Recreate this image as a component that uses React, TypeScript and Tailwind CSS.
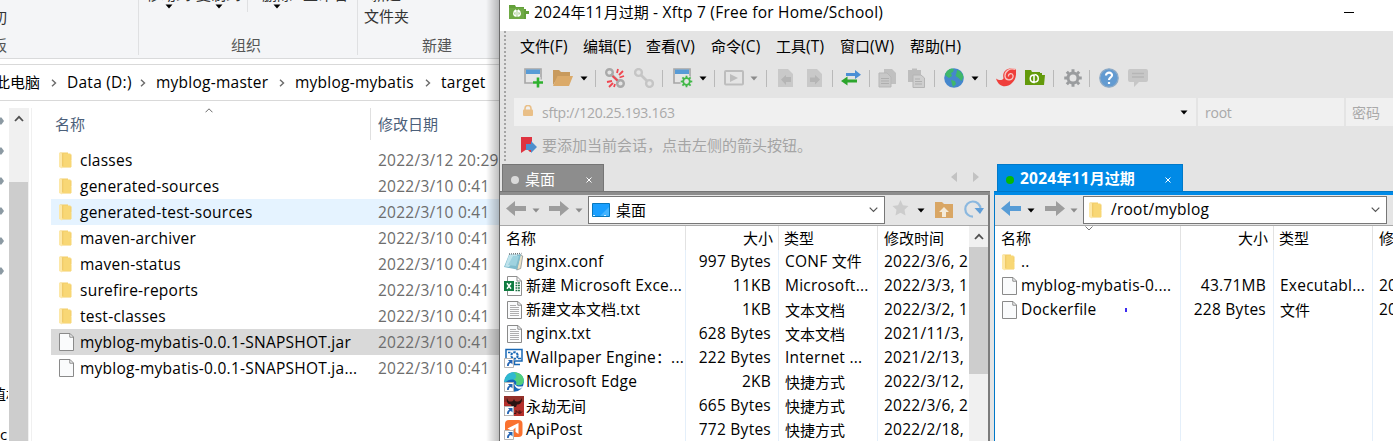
import React from "react";

const SANS = "font-['Open_Sans','Noto_Sans_CJK_SC',sans-serif]";

/* Latin runs are set slightly larger than the Chinese text around them. */
function Label({ children, className = "" }: { children: string; className?: string }) {
  const runs = children.match(/[\u2e80-\uffff]+|[^\u2e80-\uffff]+/g) ?? [];
  return (
    <span className={"inline-block text-[15px] whitespace-pre " + className}>
      {runs.map((run, i) =>
        /[\u2e80-\uffff]/.test(run) ? run : (
          <span key={i} className="text-[15.5px] tracking-[0.25px]">{run}</span>
        ),
      )}
    </span>
  );
}

function Down({ gray = false, className = "" }: { gray?: boolean; className?: string }) {
  return (
    <svg width="8" height="5" viewBox="0 0 8 5" className={"shrink-0 " + className}>
      <path d="M0.5 0.5h7L4 4.5z" fill={gray ? "#8c8c8c" : "#000"} />
    </svg>
  );
}

function Folder() {
  return (
    <svg width="13" height="17" viewBox="0 0 13 17" className="shrink-0">
      <path d="M1 .5h8V2l3.500.5V8l-.5 1v6.500H3z" fill="#f3cd69" />
      <path d="M4 1.500h7.500v6L12.500 9v6H4z" fill="#f8d775" />
      <path d="M0 .500 3.500 1.500V14L3 16.500 0 15z" fill="#fde8a8" />
      <path d="M3.700 1.500V14" stroke="#e9bf55" strokeWidth=".7" />
    </svg>
  );
}

function Page({ lines = false }: { lines?: boolean }) {
  return (
    <svg width="15" height="18" viewBox="0 0 15 18" className="shrink-0">
      <path d="M.5.5h10.5l3.5 3.5v13.5H.5z" fill="#fafbfc" stroke="#8a8a8a" />
      <path d="M10.8.5v3.7h3.7" fill="none" stroke="#8a8a8a" />
      {lines && <path d="M3 4.500h6M3 6.500h9M3 8.500h9M3 10.500h9M3 12.500h9M3 14.500h9" stroke="#9a9a9a" strokeWidth=".8" />}
    </svg>
  );
}

function Shortcut() {
  return (
    <g>
      <path d="M.5 10.500h9v9h-9z" fill="#fff" stroke="#b5b5b5" />
      <path d="M3 18c0-3 1-4 2.500-4.300L4 12h4.500v4.500L7 15c-1.500.3-2 1-2.200 3z" fill="#2464b4" />
    </g>
  );
}

function FileIcon({ kind }: { kind: string }) {
  if (kind === "txt") return <span className="ml-[3px] flex w-[17px] shrink-0"><Page lines /></span>;
  return (
    <svg width="20" height="20" viewBox="0 0 20 20" className="shrink-0">
      {kind === "conf" && (
        <>
          <path d="M16 2.500 18.700 4l-2 12.500-4 1.500z" fill="#ece2c8" stroke="#7c8588" strokeWidth=".7" />
          <path d="M5 2.500 17 2.500 13 17.500 0 15z" fill="#7fbccd" />
          <path d="M5 3h8.500L5 15 1 14.500z" fill="#bfe3ec" />
          <path d="M9 4h6l-3 10-8-1z" fill="#9ed2df" />
          <path d="M5 2 17.500 1.500" stroke="#6c7478" strokeWidth="1.400" strokeDasharray="1 1" />
        </>
      )}
      {kind === "xls" && (
        <>
          <path d="M3.500.5h9.500l4.500 4.500v14.500h-14z" fill="#fff" stroke="#8f8f8f" />
          <path d="M13 .5V5h4.500" fill="none" stroke="#8f8f8f" />
          <path d="M11.500 7h4.500M11.500 9.500h4.500M11.500 12h4.500M11.500 14.500h4.500" stroke="#217346" strokeWidth="1.400" strokeDasharray="1.900 .6" />
          <path d="M0 5h10v10H0z" fill="#107c41" />
          <path d="m3 7.300 4 5.400m0-5.400-4 5.400" stroke="#fff" strokeWidth="1.500" />
        </>
      )}
      {kind === "wall" && (
        <>
          <path d="M2 1.500h16v11.500H2z" fill="#fff" stroke="#1868b5" strokeWidth="1.500" />
          <circle cx="10.500" cy="7.500" r="3.200" fill="#fff" stroke="#1868b5" strokeWidth="2" strokeDasharray="2.500 .85" />
          <path d="M4 4.500h2.500M14 10.500h3M10.500 13v3M10 16.500h6" stroke="#1868b5" strokeWidth="1.500" />
          <Shortcut />
        </>
      )}
      {kind === "edge" && (
        <>
          <circle cx="10" cy="10" r="9.800" fill="#1767b8" />
          <path d="M.3 9C1 3 5 .2 10 .2c6 0 10 4 9.800 8.800-.3 4-5 5-8 3.500 2-2 0-5-3.500-5C5 7.500 2 9 .5 12z" fill="#2fb9d0" />
          <path d="M9 .2c7-.4 11 4 10.800 8.800-.3 4-5 5-8 3.500 1.500-1.500.5-4-2-4.800C13 6 13 2 9 .2z" fill="#52cf7c" />
          <path d="M10.500 11.500c1 3 5 3.800 8.500 2.500-.8 1.500-1.800 2.300-2.800 2.800-3 .3-6-2-5.700-5.300z" fill="#fff" />
          <Shortcut />
        </>
      )}
      {kind === "game" && (
        <>
          <path d="M0 0h20v20H0z" fill="#b5302c" />
          <path d="M0 0h20v6H0z" fill="#93302a" />
          <path d="M3 2c1 4 3 4 6 3l1-2 1 2c3 1 5 1 7-3 0 5-2 6.500-5 6.500L12 11H8L7 8.500C4 8.500 2 6 3 2z" fill="#2b1413" />
          <path d="M10 17.500h2v-3l3 3v-3m1 0v3l2-2" fill="none" stroke="#3b1313" />
          <Shortcut />
        </>
      )}
      {kind === "api" && (
        <>
          <rect x="1" width="17.500" height="17" rx="4" fill="#fa7230" />
          <path d="m3.500 8.500 11-5.500V14L11.500 12V7.500L8 11z" fill="#fff" />
          <Shortcut />
        </>
      )}
    </svg>
  );
}

const explorerRows = [
  ["classes", "2022/3/12 20:29"],
  ["generated-sources", "2022/3/10 0:41"],
  ["generated-test-sources", "2022/3/10 0:41"],
  ["maven-archiver", "2022/3/10 0:41"],
  ["maven-status", "2022/3/10 0:41"],
  ["surefire-reports", "2022/3/10 0:41"],
  ["test-classes", "2022/3/10 0:41"],
  ["myblog-mybatis-0.0.1-SNAPSHOT.jar", "2022/3/10 0:41"],
  ["myblog-mybatis-0.0.1-SNAPSHOT.ja...", "2022/3/10 0:41"],
];

function Chevron({ className }: { className: string }) {
  return (
    <svg width="6" height="8" viewBox="0 0 6 8" className={"shrink-0 " + className}>
      <path d="m1 .8 3.500 3.200L1 7.200" fill="none" stroke="#6a6a6a" strokeWidth="1.400" />
    </svg>
  );
}

function UpArrow() {
  return (
    <svg width="10" height="7" viewBox="0 0 10 7" className="shrink-0">
      <path d="m1 6 4-4.200L9 6" fill="none" stroke="#505050" strokeWidth="1.800" />
    </svg>
  );
}

function Explorer() {
  return (
    <section className="relative flex h-full w-[500px] shrink-0 flex-col overflow-hidden bg-white">
      <div className="flex h-[59px] shrink-0 border-b border-[#d9dadb] bg-[#f4f5f7] text-[15px] leading-[20px] text-[#333]">
        <div className="flex h-[55px] w-[139px] shrink-0 flex-col border-r border-[#dfe0e2] pt-[7px]">
          <span className="-ml-2">切</span>
          <span className="-ml-2 mt-2 text-[#555]">板</span>
        </div>
        <div className="flex h-[55px] w-[219px] shrink-0 flex-col border-r border-[#dfe0e2]">
          <div className="flex h-3">
            <div className="flex w-[109px] gap-[5px] border-r border-[#dfe0e2] pl-[7px]">
              <span className="-mt-[16px] flex h-7 w-[45px] flex-col items-center whitespace-nowrap">移动到<Down /></span>
              <span className="-mt-[16px] flex h-7 w-[45px] flex-col items-center whitespace-nowrap">复制到<Down /></span>
            </div>
            <div className="flex gap-[9px] pl-[12px]">
              <span className="-mt-[16px] flex h-7 w-[34px] flex-col items-center whitespace-nowrap">删除<Down /></span>
              <span className="-mt-[16px] whitespace-nowrap">重命名</span>
            </div>
          </div>
          <span className="mt-[23px] pr-1 text-center text-[#555]">组织</span>
        </div>
        <div className="flex w-[142px] flex-col pl-[6px]">
          <span className="-mt-[16px] pl-[7px]">新建</span>
          <span className="mt-[2px]">文件夹</span>
          <span className="mt-[9px] pl-[58px] text-[#555]">新建</span>
        </div>
      </div>
      <div className="mt-[5px] flex h-[37px] shrink-0 items-center border-y border-[#d9d9d9] text-black">
        <Label className="-ml-[5px] w-[45px] shrink-0">此电脑</Label>
        <Chevron className="ml-[11px]" />
        <Label className="ml-[10px] w-[63px] shrink-0">Data (D:)</Label>
        <Chevron className="ml-[10px]" />
        <Label className="ml-[10px] w-[112px] shrink-0">myblog-master</Label>
        <Chevron className="ml-[11px]" />
        <Label className="ml-[10px] w-[119px] shrink-0">myblog-mybatis</Label>
        <Chevron className="ml-[11px]" />
        <Label className="ml-[10px]">target</Label>
      </div>
      <div className="flex min-h-0 flex-1 pt-[7px]">
        <div className="flex w-[8px] shrink-0 flex-col overflow-hidden text-[15px] whitespace-nowrap">
          {[0, 1, 2, 3, 4, 5].map((i) => (
            <svg key={i} width="5" height="30" viewBox="0 0 5 30" className="-mt-[2px] mb-[2px] shrink-0">
              <path d="M0 11.500h1.500L4 15l-2.500 3.500H0z" fill="#8c9aa3" />
            </svg>
          ))}
          <span className="mt-[95px] -ml-[9px] leading-[22px]">值机</span>
          <span className="mt-[18px] -ml-[11px] leading-[22px]">.sc</span>
        </div>
        <div className="ml-px flex w-[20px] shrink-0 flex-col items-center bg-[#f0f0f0] pt-[7px]">
          <UpArrow />
          <div className="mt-[60px] w-[19px] flex-1 self-start bg-[#cdcdcd]" />
        </div>
        <div className="ml-[2px] flex min-w-0 flex-1 flex-col border-l border-[#f0f0f0] pl-[19px]">
          <div className="flex h-[39px] shrink-0 text-[15px] text-[#4c607a]">
            <div className="flex h-8 w-[320px] items-center border-r border-[#e0e0e0]">
              <span className="w-[154px] pl-1">名称</span>
              <svg width="8" height="5" viewBox="0 0 8 5" className="mb-[27px]">
                <path d="m.5 4.300 3.500-3.500 3.500 3.500" fill="none" stroke="#6a6a6a" />
              </svg>
            </div>
            <span className="flex h-8 items-center pl-[7px]">修改日期</span>
          </div>
          {explorerRows.map(([name, date], i) => (
            <div
              key={i}
              className={
                "flex h-[26px] shrink-0 items-center pl-2 " +
                (i === 2 ? "bg-[#e5f3ff]" : i === 7 ? "bg-[#d9d9d9]" : "")
              }
            >
              <span className="flex w-[21px] shrink-0">{i < 7 ? <Folder /> : <Page />}</span>
              <Label className="w-[298px] shrink-0 pt-px text-black">{name}</Label>
              <Label className="pt-px text-[#6d6d6d]">{date}</Label>
            </div>
          ))}
        </div>
      </div>
      <div className="absolute inset-y-0 right-0 w-[14px] border-r border-[#6b6b6b] bg-linear-to-r from-transparent to-black/25" />
    </section>
  );
}

function Sep({ className }: { className: string }) {
  return <span className={"h-[17px] w-px shrink-0 bg-[#b9b9b9] " + className} />;
}

function Tool({ children, className }: { children: React.ReactNode; className: string }) {
  return (
    <svg width="20" height="20" viewBox="0 0 20 20" fill="none" className={"shrink-0 " + className}>
      {children}
    </svg>
  );
}

function WindowShape() {
  return (
    <>
      <path d="M1 1h16v14H1z" fill="#e6e6e6" stroke="#a6a6a6" strokeWidth="1.600" />
      <path d="M2 1.500h14V6H2z" fill="#579bd6" />
    </>
  );
}

function Gear({ cx, cy, r, color, width }: { cx: number; cy: number; r: number; color: string; width: number }) {
  return (
    <g stroke={color}>
      <circle cx={cx} cy={cy} r={r} strokeWidth={width} />
      {[0, 45, 90, 135, 180, 225, 270, 315].map((a) => (
        <path key={a} d={`M${cx} ${cy - r}v-${r * 0.75}`} strokeWidth={width} transform={`rotate(${a} ${cx} ${cy})`} />
      ))}
    </g>
  );
}

function Toolbar() {
  return (
    <div className="flex h-[36px] shrink-0 items-center pb-[4px] pl-[23px]">
      <Tool className="">
        <WindowShape />
        <path d="M14 9v10M9 14h10" stroke="#e4e4e4" strokeWidth="5" />
        <path d="M14 9.500v10M9 14.500h10" stroke="#2fb12f" strokeWidth="2.600" />
      </Tool>
      <Tool className="ml-[9px]">
        <path d="M0 2h6l2 2h9v4H6L0 17z" fill="#c89a5d" />
        <path d="M4.500 8h15.500l-4 10H0z" fill="#dbaa69" />
      </Tool>
      <Down className="ml-[7px]" />
      <Sep className="ml-[7px]" />
      <Tool className="ml-[9px]">
        <circle cx="4.500" cy="4.500" r="3.300" stroke="#a9a9a9" strokeWidth="2.400" />
        <circle cx="15.500" cy="15.500" r="3.300" stroke="#a9a9a9" strokeWidth="2.400" />
        <path d="m6 6 8 8" stroke="#a9a9a9" strokeWidth="2.500" />
        <path d="m7.500 8 5 4.500M12 5l1-4M14 7l4-4M14.500 9.500 19 8M7 13l-5 1M8 15l-4 4M10 16l-1 3" stroke="#ef4650" strokeWidth="1.800" />
      </Tool>
      <Tool className="ml-[9px]">
        <circle cx="4.500" cy="4.500" r="3.400" stroke="#c5c5c5" strokeWidth="2.400" />
        <circle cx="15.500" cy="15.500" r="3.400" stroke="#c5c5c5" strokeWidth="2.400" />
        <path d="m6.500 6.500 7 7" stroke="#c5c5c5" strokeWidth="2.700" />
      </Tool>
      <Sep className="ml-[8px]" />
      <Tool className="ml-[10px]">
        <WindowShape />
        <circle cx="13.500" cy="13.500" r="6.300" fill="#e4e4e4" />
        <Gear cx={13.5} cy={13.5} r={3.3} color="#42b849" width={1.8} />
      </Tool>
      <Down className="ml-[6px]" />
      <Sep className="ml-[7px]" />
      <Tool className="ml-[9px]">
        <rect x="1" y="3" width="18" height="13.500" rx="1" stroke="#bdbdbd" strokeWidth="2" />
        <path d="m6 6 8 4-8 4z" fill="#bdbdbd" />
      </Tool>
      <Down gray className="ml-[6px]" />
      <Sep className="ml-[8px]" />
      <Tool className="ml-[9px]">
        <path d="M2 1h10l5 5v13H2z" fill="#c9c9c9" />
        <path d="M15 9v5h-5v3l-5-5.500L10 7v2z" fill="#b5b5b5" />
      </Tool>
      <Tool className="ml-[9px]">
        <path d="M2 1h10l5 5v13H2z" fill="#c9c9c9" />
        <path d="M5 9.500h5V7l5 4.500-5 5V14H5z" fill="#b5b5b5" />
      </Tool>
      <Sep className="ml-[7px]" />
      <Tool className="ml-[8px]">
        <path d="M5 5h9V2l6 4.700-6 4.300V8H5z" fill="#4b8fd5" />
        <path d="M16 11.500H6.500v-3L0 13l6.500 4.500v-3H16z" fill="#2ca52c" />
      </Tool>
      <Sep className="ml-[8px]" />
      <Tool className="ml-[8px]">
        <path d="M6 1h8l4 4v11H6z" fill="#c0c0c0" />
        <path d="M1 5h8l4 4v10H1z" fill="#c8c8c8" stroke="#b7b7b7" />
        <path d="M3 10.500h8M3 13h8M3 15.500h8" stroke="#afafaf" />
      </Tool>
      <Tool className="ml-[9px]">
        <path d="M1 2h4V.5h5V2h4v12H1z" fill="#bdbdbd" />
        <path d="M6 7h8l3.500 3v9.500H6z" fill="#cfcfcf" stroke="#b5b5b5" />
        <path d="M8 11h5M8 13.500h7M8 16h7" stroke="#afafaf" />
      </Tool>
      <Sep className="ml-[7px]" />
      <Tool className="ml-[9px]">
        <circle cx="10" cy="10" r="9.800" fill="#4587cd" />
        <path d="M3 3c3-3 5-3 7-2l-1 3-2 1 1 3-3 2-3-2-1-2zM13 2c4 1 6 4 6.500 7l-2 4-3-3-3-2 1-3zM7 12l4 1 1 3-3 3-1-3z" fill="#3fb76b" />
      </Tool>
      <Down className="ml-[7px]" />
      <Sep className="ml-[7px]" />
      <Tool className="ml-[9px]">
        <path d="M0 10.500c3 2 6 2 7.500 0C6 4 10 .5 15 .5L20 1c.5 7-.5 11-4 14-5 5-13 5-16-4.500z" fill="#ef3f3b" />
        <path d="M19.500 1.500c-6-2-11 2-10.500 7 1 5 9 4 8-1-1-3-5-2-4.500 1" stroke="#f8c5c1" strokeWidth="1.300" />
      </Tool>
      <Tool className="ml-[9px]">
        <path d="M0 2h6l1 2h8v1h2v2h3l-1 10H0z" fill="#639a0b" />
        <path d="M9 6.500v8c-5-.5-5-7.500 0-7.500zM9.500 14c5 0 5-7 0-7.500" stroke="#fff" strokeWidth="1.500" />
      </Tool>
      <Sep className="ml-[8px]" />
      <Tool className="ml-[9px]">
        <Gear cx={10} cy={10} r={5} color="#9a9c9e" width={3} />
      </Tool>
      <Sep className="ml-[6px]" />
      <Tool className="ml-[9px]">
        <circle cx="10" cy="10" r="9.200" fill="#639bd1" stroke="#8daac6" strokeWidth="1.300" />
        <path d="M7 7.500C7 3.500 13.500 4 13 7.500c-.2 2-3 2-3 4.500M10 14v2" stroke="#fff" strokeWidth="2.200" />
      </Tool>
      <Tool className="ml-[9px]">
        <path d="M2 1h16q2 0 2 2v9q0 2-2 2h-7l-5 5v-5H2q-2 0-2-2V3q0-2 2-2z" fill="#c7c7c7" />
        <path d="M4 5.500h12M4 9h12" stroke="#b6b6b6" strokeWidth="1.500" />
      </Tool>
    </div>
  );
}

function Arrow({ right = false, blue = false, className }: { right?: boolean; blue?: boolean; className: string }) {
  return (
    <svg width="20" height="15" viewBox="0 0 20 15" className={"shrink-0 " + className}>
      <path d={right ? "M0 5h11V0l9 7.500-9 7.500v-5H0z" : "M20 5H9V0L0 7.500 9 15v-5h11z"} fill={blue ? "#579cd6" : "#9d9d9d"} />
    </svg>
  );
}

function ComboDown() {
  return (
    <svg width="9" height="6" viewBox="0 0 9 6" className="ml-auto shrink-0">
      <path d="m.7.700 3.800 3.800L8.300.7" fill="none" stroke="#555" strokeWidth="1.200" />
    </svg>
  );
}

const localRows = [
  ["conf", "nginx.conf", "997 Bytes", "CONF 文件", "2022/3/6, 20"],
  ["xls", "新建 Microsoft Exce...", "11KB", "Microsoft...", "2022/3/3, 16"],
  ["txt", "新建文本文档.txt", "1KB", "文本文档", "2022/3/2, 1"],
  ["txt", "nginx.txt", "628 Bytes", "文本文档", "2021/11/3, 2"],
  ["wall", "Wallpaper Engine：...", "222 Bytes", "Internet ...", "2021/2/13, 2"],
  ["edge", "Microsoft Edge", "2KB", "快捷方式", "2022/3/12,"],
  ["game", "永劫无间", "665 Bytes", "快捷方式", "2022/3/6, 2"],
  ["api", "ApiPost", "772 Bytes", "快捷方式", "2022/2/18,"],
];

const cell = "flex shrink-0 items-center overflow-hidden border-r whitespace-nowrap ";

function LocalPane() {
  return (
    <div className="flex w-[490px] shrink-0 flex-col">
      <div className="flex h-[27px] shrink-0 pl-[2px]">
        <div className="flex w-[102px] items-center border border-b-0 border-[#757575] bg-[#8d8d8d] pl-2 text-[15px] text-white">
          <span className="mt-[3px] h-2 w-2 rounded-full bg-[#dadada]" />
          <span className="ml-[6px] mt-[3px]">桌面</span>
          <svg width="6" height="6" viewBox="0 0 6 6" className="mt-1 ml-[31px]"><path d="m.5.500 5 5m0-5-5 5" stroke="#fff" /></svg>
        </div>
        <svg width="30" height="12" viewBox="0 0 30 12" className="mt-[7px] ml-[346px]">
          <path d="M7 1v10L1 6zM23 1v10l6-5z" fill="#c2c2c2" />
        </svg>
      </div>
      <div className="h-1 shrink-0 border-t border-[#757575] bg-[#8d8d8d]" />
      <div className="flex min-h-0 flex-1 flex-col border-r-2 border-[#7c7c7c]">
        <div className="flex h-[31px] shrink-0 items-center border-b border-[#a8a8a8] bg-[#e5e5e5] pl-[6px]">
          <Arrow className="mb-[4px]" />
          <Down gray className="ml-[6px]" />
          <Arrow right className="mb-[4px] ml-[9px]" />
          <Down gray className="ml-[6px]" />
          <div className="ml-[5px] flex h-7 w-[297px] shrink-0 items-center border border-[#777] bg-white pr-1.5 pl-[3px] text-[15px]">
            <svg width="18" height="14" viewBox="0 0 18 14">
              <path d="M.5.500h17v13H.5z" fill="#1a9fff" stroke="#0878bd" />
              <path d="M8 13 17 4v9z" fill="#44b4ff" />
              <path d="M1 12.500h16" stroke="#d7f2ff" strokeDasharray="2 9" />
            </svg>
            <span className="ml-[6px]">桌面</span>
            <ComboDown />
          </div>
          <svg width="17" height="16" viewBox="0 0 17 16" className="mb-[4px] ml-[7px] shrink-0">
            <path d="m8.500 0 2.400 5.200 5.600.7-4 3.900 1 5.700-5-2.700-5 2.700 1-5.700-4-3.900 5.600-.7z" fill="#cccccc" />
          </svg>
          <Down className="ml-[8px]" />
          <svg width="18" height="17" viewBox="0 0 18 17" className="mb-[2px] ml-[10px] shrink-0">
            <path d="M0 1h7l2 2h9v14H0z" fill="#d9a664" />
            <path d="m9 6 5 5h-3v5H7v-5H4z" fill="#f4ead8" />
          </svg>
          <svg width="20" height="18" viewBox="0 0 20 18" className="mb-[2px] ml-[11px] shrink-0">
            <path d="M9 16.700A7.600 7.600 0 1 1 16.500 9" fill="none" stroke="#8bb8df" strokeWidth="2.200" />
            <path d="M10.500 8H20l-4 6z" fill="#5f9ed8" />
          </svg>
        </div>
        <div className="flex min-h-0 flex-1 bg-white">
          <div className="flex w-[469px] shrink-0 flex-col overflow-hidden">
            <div className="flex h-6 shrink-0 text-[15px]">
              <span className={cell + "w-[186px] border-[#e2e2e2] pl-1.5"}>名称</span>
              <span className={cell + "w-[93px] justify-end border-[#e2e2e2] pr-[5px]"}>大小</span>
              <span className={cell + "w-[99px] border-[#e2e2e2] pl-[5px]"}>类型</span>
              <span className="flex items-center pl-1.5">修改时间</span>
            </div>
            {localRows.map(([kind, name, size, type, date]) => (
              <div key={name} className="flex h-6 shrink-0">
                <span className={cell + "w-[186px] border-[#e4effa] pl-1"}>
                  <FileIcon kind={kind} />
                  <Label className="ml-[2px]">{name}</Label>
                </span>
                <span className={cell + "w-[93px] justify-end border-[#e4effa] pr-[7px]"}><Label>{size}</Label></span>
                <span className={cell + "w-[99px] border-[#e4effa] pl-1.5"}><Label>{type}</Label></span>
                <span className="ml-1.5 flex w-[84px] items-center overflow-hidden whitespace-nowrap"><Label>{date}</Label></span>
              </div>
            ))}
          </div>
          <div className="flex flex-1 flex-col items-center bg-[#f0f0f0] pt-[7px]">
            <UpArrow />
            <div className="mt-[7px] h-[127px] w-full bg-[#cdcdcd]" />
          </div>
        </div>
      </div>
    </div>
  );
}

const remoteRows = [
  ["folder", "..", "", "", ""],
  ["page", "myblog-mybatis-0....", "43.71MB", "Executabl...", "2022"],
  ["page", "Dockerfile", "228 Bytes", "文件", "2022"],
];

function RemotePane() {
  return (
    <div className="ml-1 flex min-w-0 flex-1 flex-col overflow-hidden">
      <div className="flex h-[27px] shrink-0 pl-[3px]">
        <div className="flex w-[186px] items-center border border-b-0 border-[#0079c9] bg-[#008ae6] pl-2 font-bold text-white">
          <span className="mt-[3px] h-2 w-2 shrink-0 rounded-full bg-[#06b806]" />
          <Label className="mt-px ml-[6px] w-[114px] shrink-0">2024年11月过期</Label>
          <svg width="6" height="6" viewBox="0 0 6 6" className="mt-1 ml-[31px] shrink-0"><path d="m.5.500 5 5m0-5-5 5" stroke="#fff" /></svg>
        </div>
      </div>
      <div className="h-1 shrink-0 border-t border-[#0079c9] bg-[#008ae6]" />
      <div className="flex min-h-0 flex-1 flex-col border-l border-[#0078c8]">
        <div className="flex h-[31px] shrink-0 items-center border-b border-[#a8a8a8] bg-[#e5e5e5] pl-[6px]">
          <Arrow blue className="mb-[4px]" />
          <Down className="ml-[6px]" />
          <Arrow right className="mb-[4px] ml-[10px]" />
          <Down gray className="ml-[5px]" />
          <div className="ml-[5px] flex h-7 w-[304px] shrink-0 items-center border border-[#777] bg-white pr-1.5 pl-[5px]">
            <Folder />
            <Label className="ml-[9px]">/root/myblog</Label>
            <ComboDown />
          </div>
        </div>
        <div className="flex flex-1 flex-col bg-white">
          <div className="flex h-6 shrink-0 text-[15px]">
            <span className={cell + "w-[186px] border-[#e2e2e2] pl-1.5"}>
              名称
              <svg width="8" height="5" viewBox="0 0 8 5" className="mb-[19px] ml-[54px]">
                <path d="m.5.500 3.500 3.500L7.500.5" fill="none" stroke="#777" />
              </svg>
            </span>
            <span className={cell + "w-[93px] justify-end border-[#e2e2e2] pr-[5px]"}>大小</span>
            <span className={cell + "w-[99px] border-[#e2e2e2] pl-[5px]"}>类型</span>
            <span className="flex items-center pl-1.5 whitespace-nowrap">修改时间</span>
          </div>
          {remoteRows.map(([kind, name, size, type, date]) => (
            <div key={name} className="flex h-6 shrink-0">
              <span className={cell + "w-[186px] border-[#e4effa] pl-[7px]"}>
                <span className="flex w-[19px] shrink-0">{kind === "folder" ? <Folder /> : <Page />}</span>
                <Label>{name}</Label>
                {name === "Dockerfile" && <span className="ml-[29px] h-1 w-[2px] bg-[#3d2df0]" />}
              </span>
              <span className={cell + "w-[93px] justify-end border-[#e4effa] pr-[7px]"}><Label>{size}</Label></span>
              <span className={cell + "w-[99px] border-[#e4effa] pl-1.5"}><Label>{type}</Label></span>
              <span className="flex items-center pl-1.5"><Label>{date}</Label></span>
            </div>
          ))}
          <div className="flex flex-1">
            <span className="w-[186px] border-r border-[#e4effa]" />
            <span className="w-[93px] border-r border-[#e4effa]" />
            <span className="w-[99px] border-r border-[#e4effa]" />
          </div>
        </div>
      </div>
    </div>
  );
}

function Xftp() {
  return (
    <section className="flex h-full w-[893px] shrink-0 flex-col bg-[#e4e4e4] text-black">
      <div className="flex h-[31px] shrink-0 items-center bg-white pb-[6px] pl-[9px]">
        <svg width="20" height="15" viewBox="0 0 20 15">
          <path d="M0 0h6l1 2h8v2h2v2h3v3h-3v5H0z" fill="#63a03a" />
          <path d="M0 3h15v11H0z" fill="#6faa45" />
          <path d="M7 5v6c-3-.5-3-4.500 0-6m2 0v6c3-.5 3-4.500 0-6" fill="none" stroke="#fff" strokeWidth="1.400" />
        </svg>
        <Label className="ml-[5px]">2024年11月过期 - Xftp 7 (Free for Home/School)</Label>
        <span className="mr-[39px] ml-auto h-px w-[10px] bg-black" />
      </div>
      <div className="flex h-[133px] shrink-0">
        <div className="ml-1 h-[130px] w-0 shrink-0 border-l-2 border-dotted border-[#a5a5a5]" />
        <div className="flex min-w-0 flex-1 flex-col">
          <div className="flex h-[31px] shrink-0 items-center pl-[14px]">
            <Label className="w-[63px]">文件(F)</Label>
            <Label className="w-[63px]">编辑(E)</Label>
            <Label className="w-[65px]">查看(V)</Label>
            <Label className="w-[65px]">命令(C)</Label>
            <Label className="w-[64px]">工具(T)</Label>
            <Label className="w-[70px]">窗口(W)</Label>
            <Label>帮助(H)</Label>
          </div>
          <div className="-ml-[5px] flex flex-col"><Toolbar /></div>
          <div className="ml-2 flex h-7 shrink-0 gap-[2px] text-[14px] text-[#a9a9a9]">
            <div className="flex w-[682px] shrink-0 items-center bg-[#f0f0f0] pr-2 pl-[9px]">
              <svg width="10" height="11" viewBox="0 0 10 11" className="mb-1">
                <path d="M2 5V3.500a3 3 0 0 1 6 0V5" fill="none" stroke="#e9bf87" strokeWidth="1.600" />
                <rect y="4.500" width="10" height="6.500" rx="1" fill="#e9bf87" />
              </svg>
              <span className="mt-px ml-[9px] tracking-[-0.250px]">sftp://120.25.193.163</span>
              <Down className="ml-auto" />
            </div>
            <div className="flex w-[146px] shrink-0 items-center bg-[#f0f0f0] pl-[7px] pt-px tracking-[-0.250px]">root</div>
            <div className="flex flex-1 items-center bg-[#f0f0f0] pl-[6px] pt-px">密码</div>
          </div>
          <div className="flex flex-1 items-center pl-[15px] text-[15px] text-[#a5a5a5]">
            <svg width="16" height="17" viewBox="0 0 16 17">
              <path d="M0 0h11v15H9L6 12l-6 4z" fill="#df3340" />
              <path d="M5 7h5V4l6 6-6 6v-3H5z" fill="#4d8fcd" />
            </svg>
            <span className="ml-[5px]">要添加当前会话，点击左侧的箭头按钮。</span>
          </div>
        </div>
      </div>
      <div className="flex min-h-0 flex-1">
        <LocalPane />
        <RemotePane />
      </div>
    </section>
  );
}

export default function App() {
  return (
    <main className={"flex h-[441px] w-[1393px] overflow-hidden bg-white " + SANS}>
      <Explorer />
      <Xftp />
    </main>
  );
}
